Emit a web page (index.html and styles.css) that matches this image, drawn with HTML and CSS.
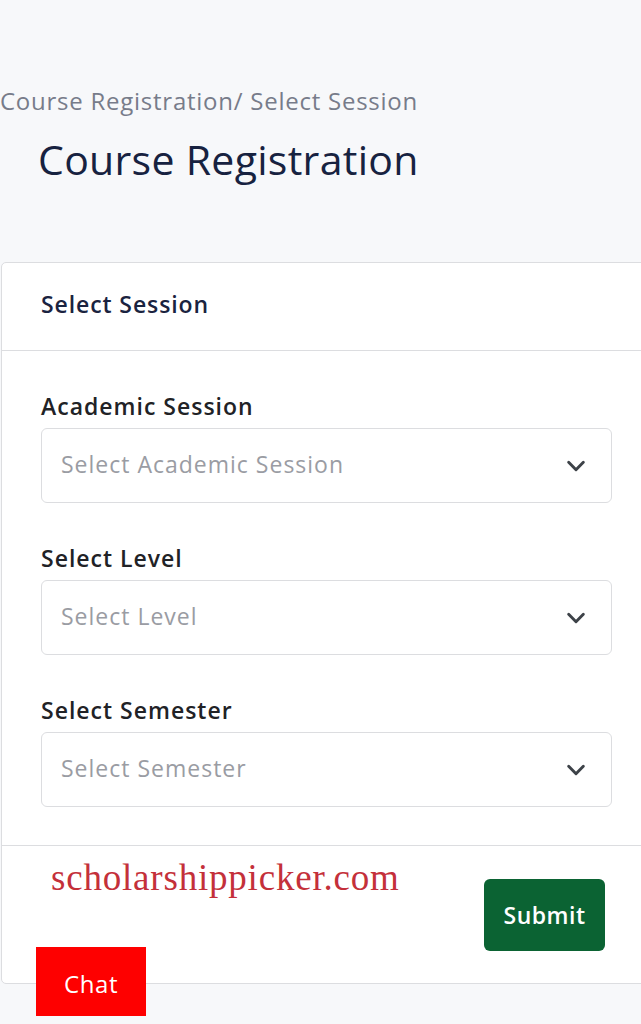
FILE: index.html
```html
<!DOCTYPE html>
<html>
<head>
<meta charset="utf-8">
<link rel="stylesheet" href="styles.css">
</head>
<body>
<div class="page">
  <div class="breadcrumb">Course Registration/ Select Session</div>
  <h1 class="title">Course Registration</h1>
  <div class="card">
    <div class="card-header">Select Session</div>
    <div class="card-body">
      <div class="field">
        <div class="label">Academic Session</div>
        <div class="select"><span>Select Academic Session</span>
          <svg class="chev" viewBox="0 0 24 24" width="22" height="22"><path d="M4 8 L12 16 L20 8" fill="none" stroke="#3d4248" stroke-width="3.2" stroke-linecap="round" stroke-linejoin="round"/></svg>
        </div>
      </div>
      <div class="field">
        <div class="label">Select Level</div>
        <div class="select"><span>Select Level</span>
          <svg class="chev" viewBox="0 0 24 24" width="22" height="22"><path d="M4 8 L12 16 L20 8" fill="none" stroke="#3d4248" stroke-width="3.2" stroke-linecap="round" stroke-linejoin="round"/></svg>
        </div>
      </div>
      <div class="field">
        <div class="label">Select Semester</div>
        <div class="select"><span>Select Semester</span>
          <svg class="chev" viewBox="0 0 24 24" width="22" height="22"><path d="M4 8 L12 16 L20 8" fill="none" stroke="#3d4248" stroke-width="3.2" stroke-linecap="round" stroke-linejoin="round"/></svg>
        </div>
      </div>
    </div>
    <div class="card-footer">
      <div class="watermark">scholarshippicker.com</div>
      <button class="submit">Submit</button>
    </div>
  </div>
</div>
<div class="chat">Chat</div>
</body>
</html>
```
FILE: styles.css
```css
html, body {
  margin: 0;
  padding: 0;
  background: #f7f8fa;
  overflow: hidden;
  height: 1024px;
}
body {
  font-family: "Open Sans", "Noto Sans", sans-serif;
  position: relative;
}
.page {
  padding-top: 88px;
}
.breadcrumb {
  font-size: 24px;
  color: #777c8a;
  line-height: 26px;
  letter-spacing: 0.75px;
}
.title {
  margin: 21px 0 0 38px;
  font-size: 41px;
  font-weight: 400;
  letter-spacing: 0.3px;
  color: #172240;
  line-height: 48px;
}
.card {
  margin-top: 79px;
  margin-left: 1px;
  width: 660px;
  background: #fff;
  border: 1px solid #dcdde0;
  border-radius: 5px;
  box-sizing: border-box;
}
.card-header {
  height: 88px;
  box-sizing: border-box;
  padding: 0 39px 5px;
  display: flex;
  align-items: center;
  font-size: 23px;
  font-weight: 600;
  letter-spacing: 0.9px;
  color: #1a2340;
  border-bottom: 1px solid #dcdde0;
}
.card-body {
  padding: 41px 0 38px 39px;
  display: flex;
  flex-direction: column;
  gap: 41px;
  border-bottom: 1px solid #dcdde0;
}
.field {
  display: flex;
  flex-direction: column;
  gap: 8px;
}
.label {
  font-size: 23px;
  font-weight: 600;
  letter-spacing: 1px;
  color: #212226;
  line-height: 28px;
}
.select {
  width: 571px;
  height: 75px;
  box-sizing: border-box;
  border: 1px solid #dcdde0;
  border-radius: 6px;
  display: flex;
  align-items: center;
  justify-content: space-between;
  padding: 0 24px 3px 19px;
  font-size: 23px;
  letter-spacing: 1px;
  color: #9a9ca3;
}
.chev { display: block; margin-top: 3px; }
.card-footer {
  height: 137px;
  box-sizing: border-box;
  position: relative;
  padding: 33px 0 0 482px;
}
.watermark {
  position: absolute;
  left: 49px;
  top: 10px;
  font-family: "Liberation Serif", serif;
  font-size: 37px;
  letter-spacing: 0.8px;
  color: #c4303a;
}
.submit {
  width: 121px;
  height: 72px;
  background: #0b6333;
  color: #fff;
  border: none;
  border-radius: 6px;
  font-family: "Open Sans", "Noto Sans", sans-serif;
  font-size: 23px;
  font-weight: 600;
  letter-spacing: 0.5px;
}
.chat {
  position: absolute;
  left: 36px;
  top: 947px;
  width: 110px;
  height: 69px;
  background: #fe0000;
  color: #fff;
  font-size: 24px;
  letter-spacing: 0.6px;
  display: flex;
  align-items: center;
  justify-content: center;
  padding-top: 3px;
  box-sizing: border-box;
}
```
